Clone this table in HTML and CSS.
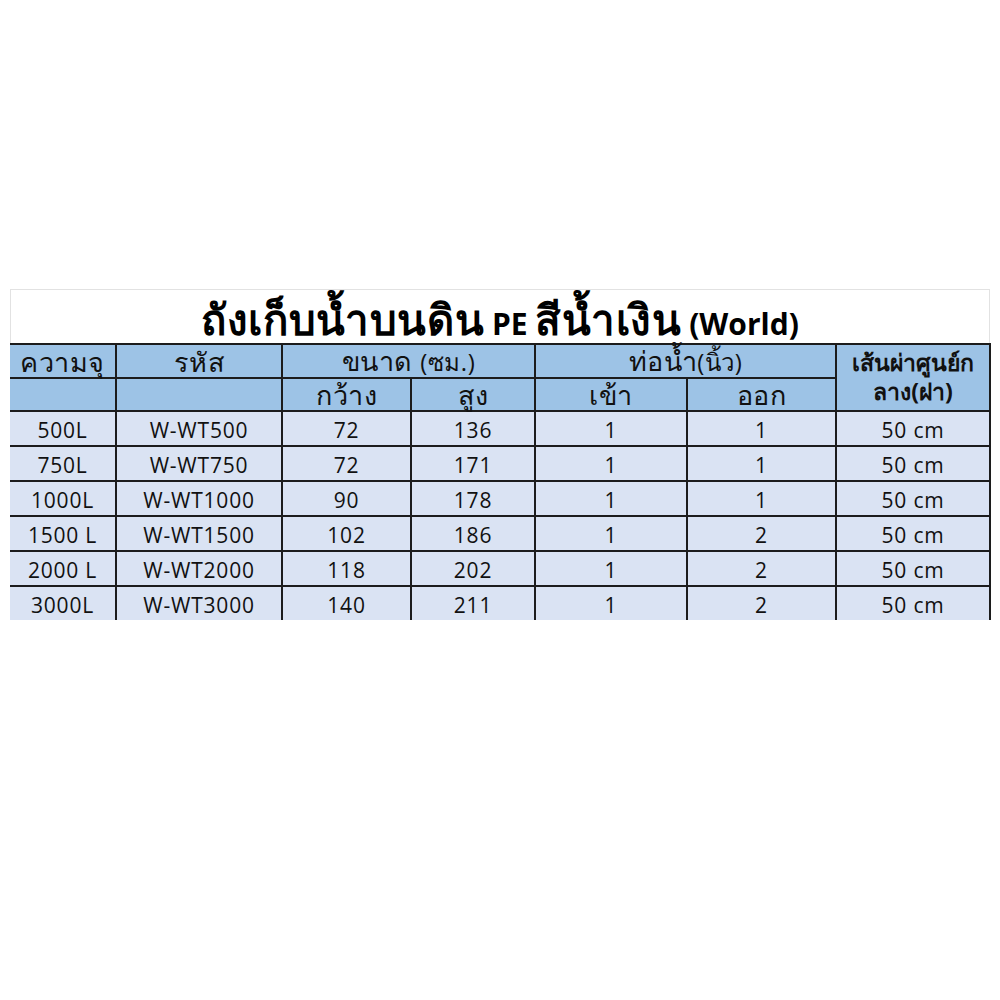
FILE: index.html
```html
<!DOCTYPE html>
<html lang="th">
<head>
<meta charset="utf-8">
<title>ถังเก็บน้ำบนดิน PE สีน้ำเงิน (World)</title>
<link rel="stylesheet" href="styles.css">
</head>
<body>
<div class="sheet">
  <div class="title"><span class="th">ถังเก็บน้ำบนดิน</span> <span class="lat">PE</span> <span class="th">สีน้ำเงิน</span> <span class="lat">(World)</span></div>
  <table class="grid">
    <colgroup>
      <col class="c1"><col class="c2"><col class="c3"><col class="c4"><col class="c5"><col class="c6"><col class="c7">
    </colgroup>
    <thead>
      <tr class="h1">
        <th class="first">ความจุ</th>
        <th>รหัส</th>
        <th colspan="2">ขนาด <span class="small">(ซม.)</span></th>
        <th colspan="2">ท่อน้ำ<span class="small">(นิ้ว)</span></th>
        <th rowspan="2" class="diam">เส้นผ่าศูนย์ก<br>ลาง(ฝา)</th>
      </tr>
      <tr class="h2">
        <th class="first"></th>
        <th></th>
        <th>กว้าง</th>
        <th>สูง</th>
        <th>เข้า</th>
        <th>ออก</th>
      </tr>
    </thead>
    <tbody>
      <tr><td class="first">500L</td><td>W-WT500</td><td>72</td><td>136</td><td>1</td><td>1</td><td>50 cm</td></tr>
      <tr><td class="first">750L</td><td>W-WT750</td><td>72</td><td>171</td><td>1</td><td>1</td><td>50 cm</td></tr>
      <tr><td class="first">1000L</td><td>W-WT1000</td><td>90</td><td>178</td><td>1</td><td>1</td><td>50 cm</td></tr>
      <tr><td class="first">1500 L</td><td>W-WT1500</td><td>102</td><td>186</td><td>1</td><td>2</td><td>50 cm</td></tr>
      <tr><td class="first">2000 L</td><td>W-WT2000</td><td>118</td><td>202</td><td>1</td><td>2</td><td>50 cm</td></tr>
      <tr class="last"><td class="first">3000L</td><td>W-WT3000</td><td>140</td><td>211</td><td>1</td><td>2</td><td>50 cm</td></tr>
    </tbody>
  </table>
</div>
</body>
</html>
```

FILE: styles.css
```css
html, body {
  margin: 0;
  padding: 0;
  background: #ffffff;
}
body {
  font-family: "Open Sans", "Noto Sans", "DejaVu Sans", sans-serif;
  color: #111111;
}
.sheet {
  margin: 289px 0 0 10px;
  width: 980px;
}
.title {
  box-sizing: border-box;
  height: 54px;
  padding-top: 6px;
  border: 1px solid #e2e2e2;
  border-bottom: none;
  text-align: center;
  line-height: 46px;
  font-size: 30px;
  font-weight: bold;
  color: #000;
  white-space: nowrap;
}
.title .th {
  font-size: 42px;
  letter-spacing: 0.6px;
}
.title .lat {
  font-size: 30px;
}
.grid {
  border-collapse: collapse;
  table-layout: fixed;
  width: 980px;
}
.c1 { width: 106px; }
.c2 { width: 166px; }
.c3 { width: 129px; }
.c4 { width: 124px; }
.c5 { width: 152px; }
.c6 { width: 149px; }
.c7 { width: 154px; }
.grid th, .grid td {
  border: 2px solid #1c1c1c;
  padding: 0;
  text-align: center;
  white-space: nowrap;
  overflow: visible;
}
.grid .first {
  border-left: none;
}
.grid thead th {
  background: #9dc3e6;
  font-weight: normal;
  font-size: 27px;
  letter-spacing: 0.5px;
  line-height: 28px;
  vertical-align: bottom;
  padding-bottom: 1px;
}
.grid .h1 th {
  height: 31px;
}
.grid .h2 th {
  height: 30px;
}
.grid .small {
  font-size: 24px;
}
.grid th.diam {
  font-weight: bold;
  font-size: 23px;
  letter-spacing: 0;
  line-height: 29px;
  vertical-align: top;
  padding-top: 3px;
  padding-bottom: 0;
}
.grid tbody td {
  background: #dae3f3;
  font-size: 21px;
  letter-spacing: 0.8px;
  height: 31px;
  line-height: 26px;
  padding-top: 2px;
}
.grid tr.last td {
  border-bottom: none;
  height: 31px;
}
```
